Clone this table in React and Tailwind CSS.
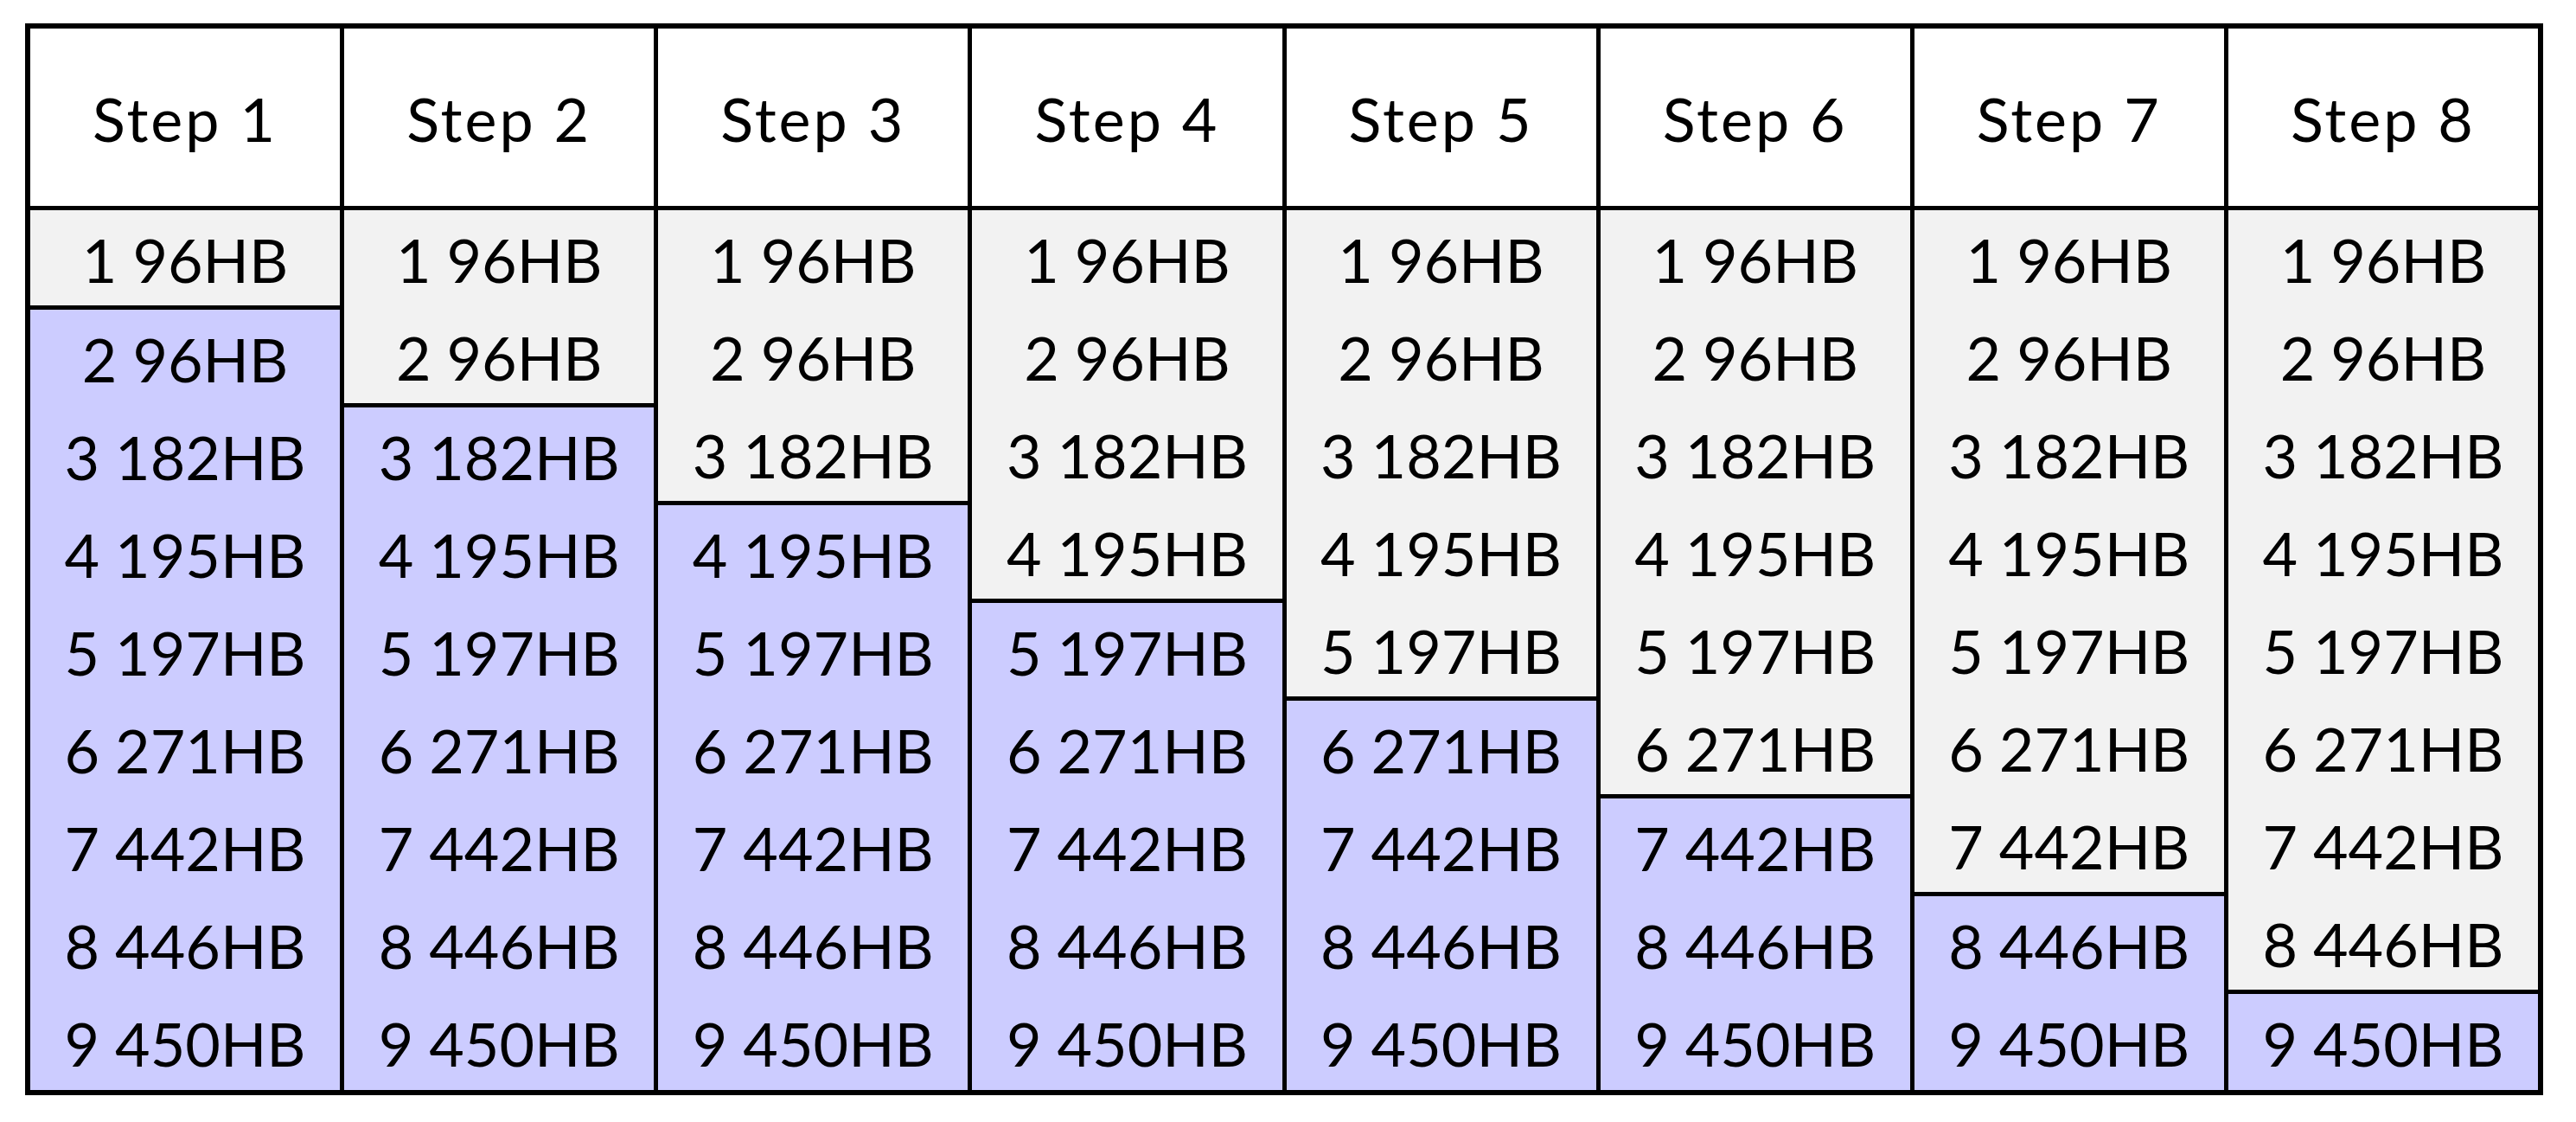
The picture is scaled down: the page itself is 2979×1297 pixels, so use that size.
import React from 'react';

const values = ["96", "96", "182", "195", "197", "271", "442", "446", "450"];
const steps = [1, 2, 3, 4, 5, 6, 7, 8];
const ROW = 113;

function Cell({n}) {
    return (
        <div className="h-[113px] shrink-0 flex items-center justify-center leading-none">
            {n} {values[n - 1]}HB
        </div>
    );
}

function StepColumn({step}) {
    const rows = values.map((v, i) => i + 1);
    const grey = rows.slice(0, step);
    const blue = rows.slice(step);
    return (
        <div className={`flex-1 flex flex-col ${step > 1 ? "border-l-[5px] border-black" : ""}`}>
            <div className="h-[210px] shrink-0 border-b-[5px] border-black bg-white flex items-center justify-center leading-none tracking-[3px] pt-[3px]">
                Step {step}
            </div>
            <div className="h-[1017px] flex flex-col">
                <div className="bg-[#f2f2f2] overflow-hidden shrink-0" style={{height: step * ROW - 3}}>
                    {grey.map(n => <Cell key={n} n={n}/>)}
                </div>
                <div className="flex-1 bg-[#ccccff] border-t-[5px] border-black overflow-hidden">
                    {blue.map(n => <Cell key={n} n={n}/>)}
                </div>
            </div>
        </div>
    );
}

export default function App() {
    return (
        <div className="min-h-screen bg-white pt-[27px] pl-[29px] text-black text-[70px]"
             style={{fontFamily: "Lato, 'Open Sans', sans-serif"}}>
            <div className="w-[2912px] border-[6px] border-black flex">
                {steps.map(s => <StepColumn key={s} step={s}/>)}
            </div>
        </div>
    );
}
